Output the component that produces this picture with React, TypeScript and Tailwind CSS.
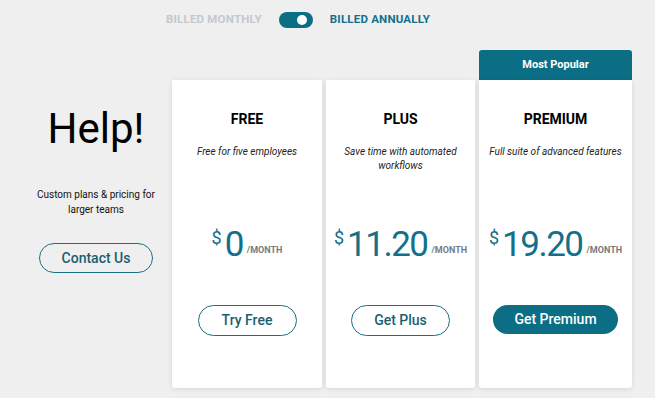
import React from "react";

type Plan = {
  name: string;
  blurb: string[];
  price: string;
  cta: string;
  popular?: boolean;
};

const plans: Plan[] = [
  { name: "FREE", blurb: ["Free for five employees"], price: "0", cta: "Try Free" },
  { name: "PLUS", blurb: ["Save time with automated", "workflows"], price: "11.20", cta: "Get Plus" },
  { name: "PREMIUM", blurb: ["Full suite of advanced features"], price: "19.20", cta: "Get Premium", popular: true },
];

function PlanCard({ plan, width }: { plan: Plan; width: string }) {
  return (
    <div className={`flex flex-col ${width} ${plan.popular ? "" : "mt-[30px]"}`}>
      {plan.popular ? (
        <div className="flex h-[30px] items-center justify-center rounded-t-[3px] bg-[#0c6e84] text-[11px] font-bold text-white">
          Most Popular
        </div>
      ) : null}
      <div className="flex h-[308px] flex-col items-center rounded-b-[3px] bg-white pt-[29px] shadow-[0_1px_5px_rgba(0,0,0,0.10)]">
        <div className="h-[20px] text-[14px] font-bold leading-[20px] text-black">{plan.name}</div>
        <div className="mt-[16px] h-[77px] text-center text-[10px] italic leading-[14px] text-[#222]">
          {plan.blurb.map((l) => (
            <div key={l}>{l}</div>
          ))}
        </div>
        <div className="flex h-[40px] items-end text-[#14708a]">
          <span className="mb-[15px] mr-[3px] text-[18px] leading-none">$</span>
          <span className="text-[35px] leading-none tracking-[-1.5px]">{plan.price}</span>
          <span className="mb-[5px] ml-[4px] text-[9px] font-bold text-[#757b82]">/MONTH</span>
        </div>
        <div className="mt-[43px]">
          {plan.popular ? (
            <button className="h-[29px] w-[125px] rounded-full bg-[#0c6e84] text-[14px] font-medium text-white">
              {plan.cta}
            </button>
          ) : (
            <button className="h-[31px] w-[99px] rounded-full border-[1.5px] border-[#1a6f82] text-[14px] font-medium text-[#1a5f70]">
              {plan.cta}
            </button>
          )}
        </div>
      </div>
    </div>
  );
}

export default function App() {
  return (
    <div className="h-[398px] w-[655px] overflow-hidden bg-[#efefef] font-['Roboto',sans-serif]">
      <div className="flex h-[40px] items-center pl-[166px] text-[11.5px] font-bold tracking-[0.2px]">
        <span className="text-[#c3c9ce]">BILLED MONTHLY</span>
        <div className="ml-[17px] flex h-[16px] w-[34px] items-center justify-end rounded-full bg-[#0c6e84] pr-[6px]">
          <div className="h-[10px] w-[10px] rounded-full bg-white" />
        </div>
        <span className="ml-[17px] text-[#14708a]">BILLED ANNUALLY</span>
      </div>

      <div className="mt-[10px] flex items-start">
        <div className="flex w-[172px] flex-col items-center pl-[20px]">
          <div className="mt-[58px] text-[42px] leading-none text-black">Help!</div>
          <div className="mt-[37px] text-center text-[10px] leading-[15px] text-[#111]">
            Custom plans &amp; pricing for
            <br />
            larger teams
          </div>
          <button className="mt-[26px] h-[30px] w-[114px] rounded-full border-[1.5px] border-[#1a6f82] text-[14px] font-medium text-[#1a5f70]">
            Contact Us
          </button>
        </div>
        <div className="flex gap-[4px]">
          <PlanCard plan={plans[0]} width="w-[150px]" />
          <PlanCard plan={plans[1]} width="w-[149px]" />
          <PlanCard plan={plans[2]} width="w-[153px]" />
        </div>
      </div>
    </div>
  );
}
